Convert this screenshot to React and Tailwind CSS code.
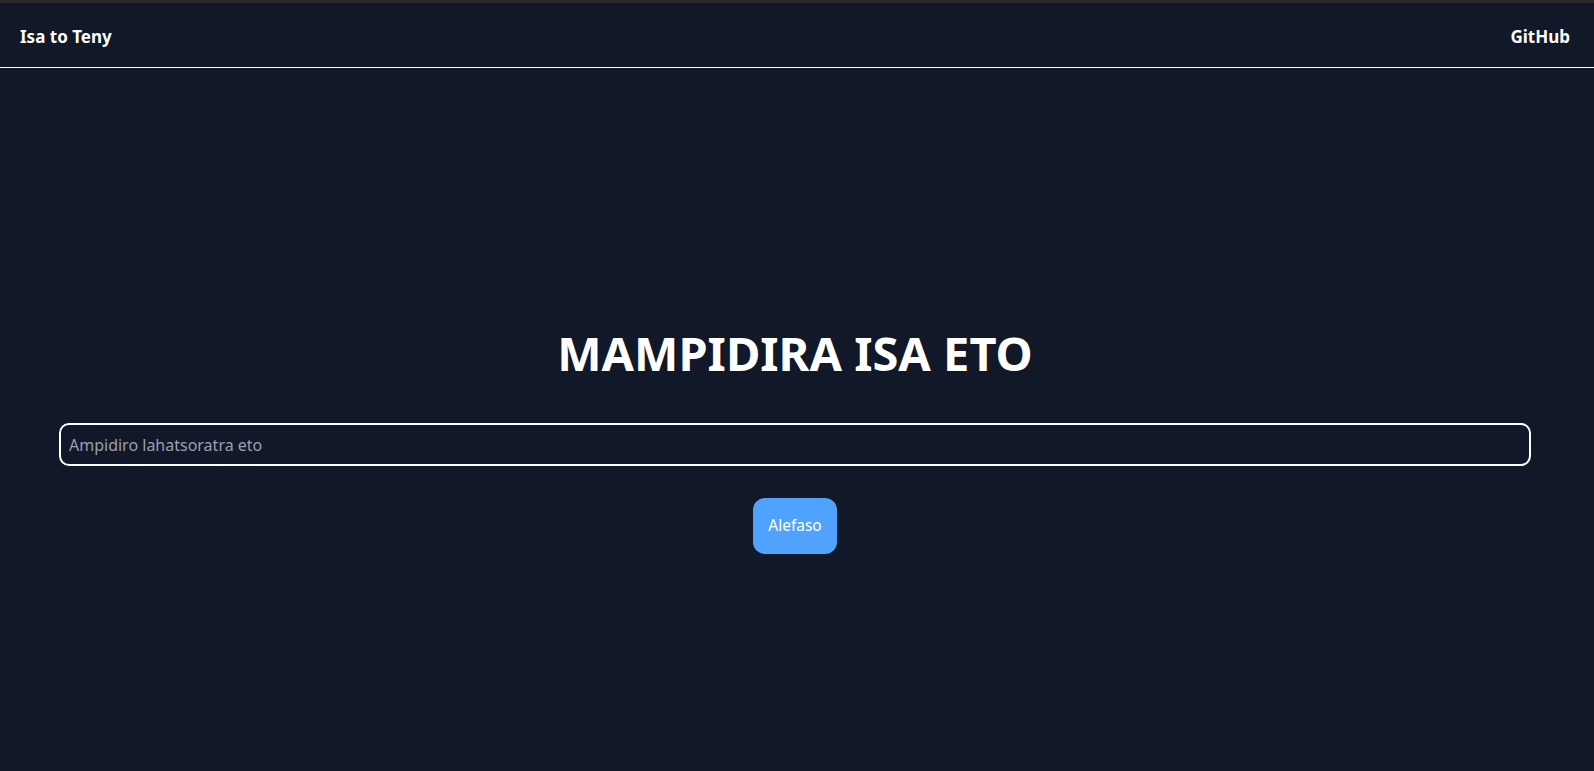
export default function App() {
    const font = { fontFamily: '"Noto Sans", "Open Sans", sans-serif' };

    return (
        <div className="min-h-screen bg-[#111827] border-t-[3px] border-[#2a2a2e] text-white" style={font}>
            <nav className="h-[65px] flex items-center justify-between pl-5 pr-6 pt-1 border-b border-white">
                <span className="text-[17px] font-bold">Isa to Teny</span>
                <a className="text-[17px] font-bold" href="#">GitHub</a>
            </nav>

            <main className="flex flex-col items-center pt-[262px] pl-[59px] pr-[63px]">
                <h1 className="text-[47px] leading-none font-bold">MAMPIDIRA ISA ETO</h1>

                <input
                    className="mt-[46px] w-full h-[43px] px-2 text-base bg-transparent border-2 border-white rounded-[10px] outline-none placeholder:text-gray-400"
                    type="text"
                    placeholder="Ampidiro lahatsoratra eto"
                />

                <button className="mt-8 h-14 px-[15px] rounded-xl bg-[#4fa3fd] text-white text-[15.5px]" type="button">
                    Alefaso
                </button>
            </main>
        </div>
    );
}
